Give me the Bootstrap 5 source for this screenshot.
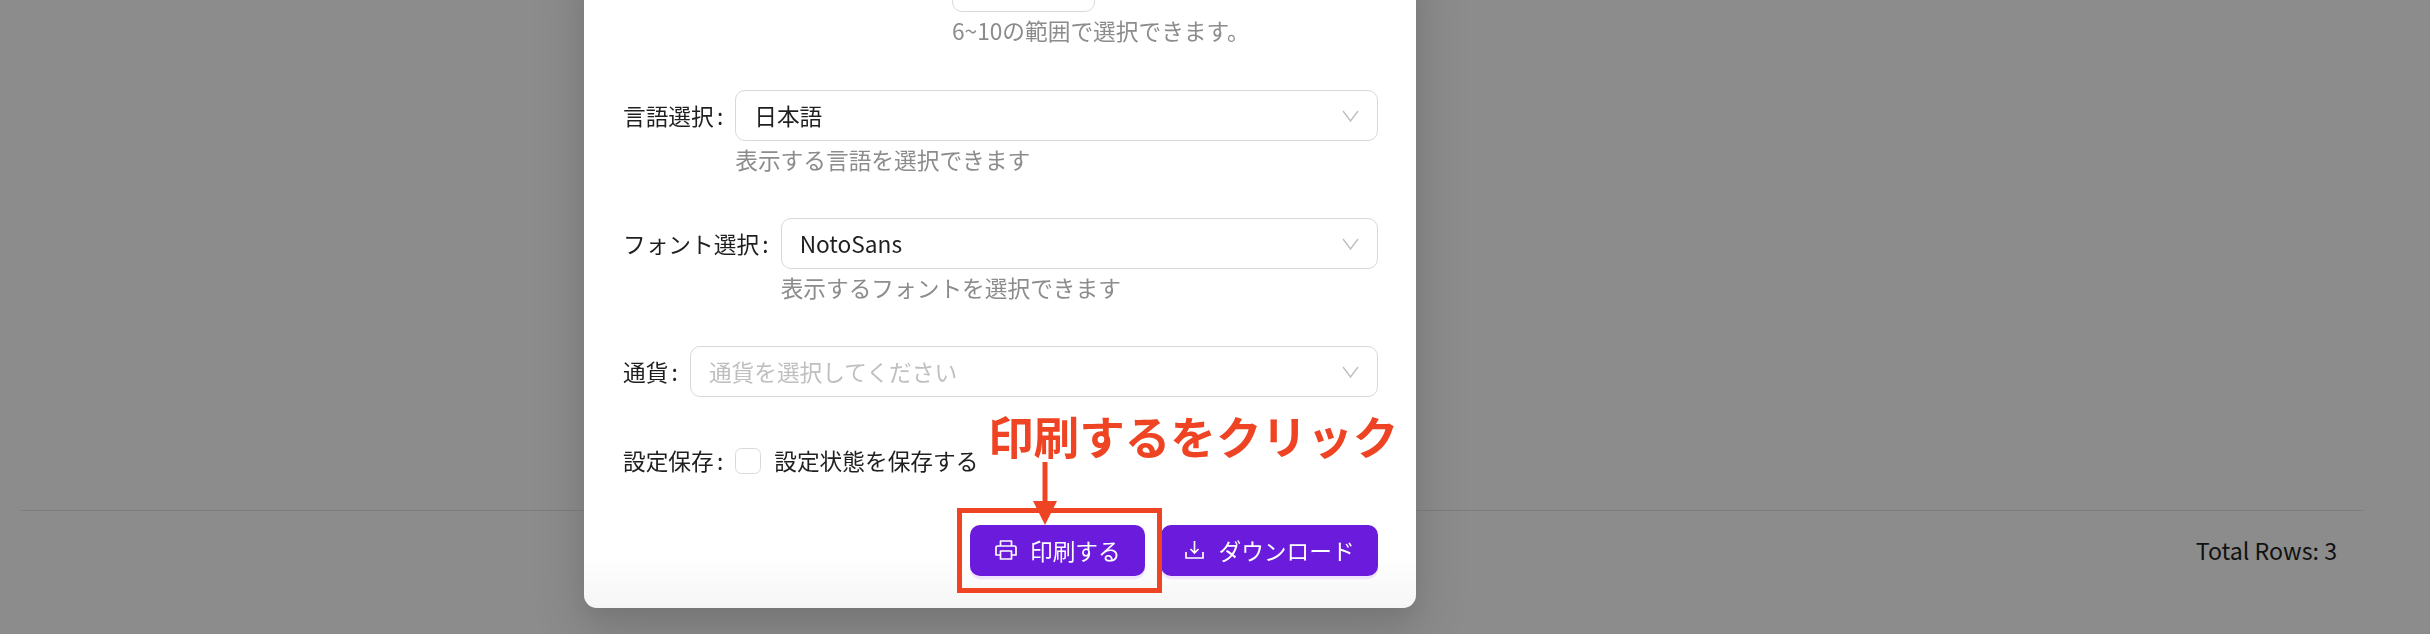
<!DOCTYPE html>
<html lang="ja">
<head>
<meta charset="utf-8">
<title>印刷設定</title>
<link href="https://cdn.jsdelivr.net/npm/bootstrap@5.3.0/dist/css/bootstrap.min.css" rel="stylesheet">
<style>
html,body{height:100%;overflow:hidden;}
body{font-family:"Noto Sans CJK JP","Noto Sans",sans-serif;font-size:22.7px;line-height:35.2px;color:#1f1f1f;background:#fff;}
.page-shell{height:634px;padding:0 67px 0 21px;}
.page-foot{height:124px;border-top:1.6px solid #e6e6e6;padding:22px 26px 0 0;font-size:23.2px;}
.scrim{position:fixed;inset:0;background:rgba(0,0,0,.45);}
.dlg{position:absolute;left:584px;top:-60px;width:832px;height:668px;padding:20.5px 38.5px 32px 39px;border-radius:13px;background:linear-gradient(to bottom,#fff 0,#fff 92%,#f6f6f6 100%);box-shadow:0 10px 26px rgba(0,0,0,.06),0 22px 50px 6px rgba(0,0,0,.12);}
.stub{width:143px;height:51px;margin-left:329px;border:1.6px solid #d9d9d9;border-radius:10px;background:#fff;}
.hint{color:#8c8c8c;margin-top:.5px;line-height:35.2px;}
.stubhint{margin:1px 0 42.3px 329px;}
.rowgap{margin-bottom:41.3px;}
.lbl{white-space:nowrap;flex:none;}
.lbl i{font-style:normal;margin:0 12px 0 3.2px;}
.lbl-h{height:51px;}
.gap-last{margin-bottom:46.400px;}
.pick{height:51px;border:1.6px solid #d9d9d9;border-radius:10px;padding:0 17.6px 0 18px;background:#fff;}
.ph{color:#bfbfbf;}
.pick svg{width:17px;height:12px;flex:none;}
.tick.form-check-input{width:25.6px;height:25.6px;margin:0 13.4px 0 0;border:1.6px solid #d9d9d9;border-radius:6.4px;flex:none;}
.act{height:51px;border:0;border-radius:10px;background:#6a1bdb;color:#fff;font-size:22.7px;line-height:35px;padding:0 0 0 25px;box-shadow:0 3.2px 0 #f0e4fd;gap:13.500px;}
.act:hover{background:#6a1bdb;color:#fff;}
.act-a{width:175px;}
.act-b{width:217px;margin-left:16px;padding-left:24px;gap:15px;}
.ico-print{width:22px;height:20px;flex:none;}
.ico-down{width:19px;height:18px;flex:none;}
.note{position:absolute;left:988px;top:406.500px;font-size:45.6px;line-height:56px;font-weight:700;color:#ee4423;white-space:nowrap;}
.callbox{position:absolute;left:957px;top:508px;width:205px;height:85px;border:5px solid #ee4423;}
.pointer{position:absolute;left:1031px;top:460px;width:28px;height:66px;}
</style>
</head>
<body>
<div class="page-shell d-flex flex-column justify-content-end">
  <div class="page-foot text-end">Total Rows: 3</div>
</div>
<div class="scrim"></div>
<div class="dlg">
  <div class="stub"></div>
  <div class="hint stubhint">6~10の範囲で選択できます。</div>

  <div class="d-flex rowgap">
    <div class="lbl lbl-h d-flex align-items-center">言語選択<i>:</i></div>
    <div class="flex-grow-1">
      <div class="pick d-flex align-items-center justify-content-between"><span>日本語</span><svg viewBox="0 0 17 12" fill="none" stroke="#bfbfbf" stroke-width="1.4"><path d="M1 1l7.500 10L16 1"/></svg></div>
      <div class="hint">表示する言語を選択できます</div>
    </div>
  </div>

  <div class="d-flex rowgap">
    <div class="lbl lbl-h d-flex align-items-center">フォント選択<i>:</i></div>
    <div class="flex-grow-1">
      <div class="pick d-flex align-items-center justify-content-between"><span>NotoSans</span><svg viewBox="0 0 17 12" fill="none" stroke="#bfbfbf" stroke-width="1.4"><path d="M1 1l7.500 10L16 1"/></svg></div>
      <div class="hint">表示するフォントを選択できます</div>
    </div>
  </div>

  <div class="d-flex gap-last">
    <div class="lbl lbl-h d-flex align-items-center">通貨<i>:</i></div>
    <div class="pick flex-grow-1 d-flex align-items-center justify-content-between"><span class="ph">通貨を選択してください</span><svg viewBox="0 0 17 12" fill="none" stroke="#bfbfbf" stroke-width="1.4"><path d="M1 1l7.500 10L16 1"/></svg></div>
  </div>

  <div class="d-flex align-items-center gap-last">
    <div class="lbl">設定保存<i>:</i></div>
    <input class="form-check-input tick" type="checkbox" aria-label="設定状態を保存する">
    <span>設定状態を保存する</span>
  </div>

  <div class="d-flex justify-content-end">
    <button type="button" class="btn act act-a d-flex align-items-center justify-content-start">
      <svg class="ico-print" viewBox="0 0 22 20" fill="none" stroke="#fff" stroke-width="1.700" stroke-linejoin="round"><path d="M5.500 6V1h11v5"/><path d="M5.500 15H1V7.500A1.500 1.500 0 0 1 2.500 6h17A1.500 1.500 0 0 1 21 7.500V15h-4.500"/><path d="M5.500 11h11v8h-11z"/></svg>
      <span>印刷する</span>
    </button>
    <button type="button" class="btn act act-b d-flex align-items-center justify-content-start">
      <svg class="ico-down" viewBox="0 0 19 18" fill="none" stroke="#fff" stroke-width="1.700"><path d="M9.500 0v12"/><path d="M5.500 8l4 4 4-4"/><path d="M1 11v6h17v-6"/></svg>
      <span>ダウンロード</span>
    </button>
  </div>
</div>
<div class="note">印刷するをクリック</div>
<div class="callbox"></div>
<svg class="pointer" viewBox="0 0 28 66"><path d="M11.500 2h5v42h-5z" fill="#ee4423"/><path d="M2 41h24L14 65z" fill="#ee4423"/></svg>
<script src="https://cdn.jsdelivr.net/npm/bootstrap@5.3.0/dist/js/bootstrap.bundle.min.js"></script>
</body>
</html>
